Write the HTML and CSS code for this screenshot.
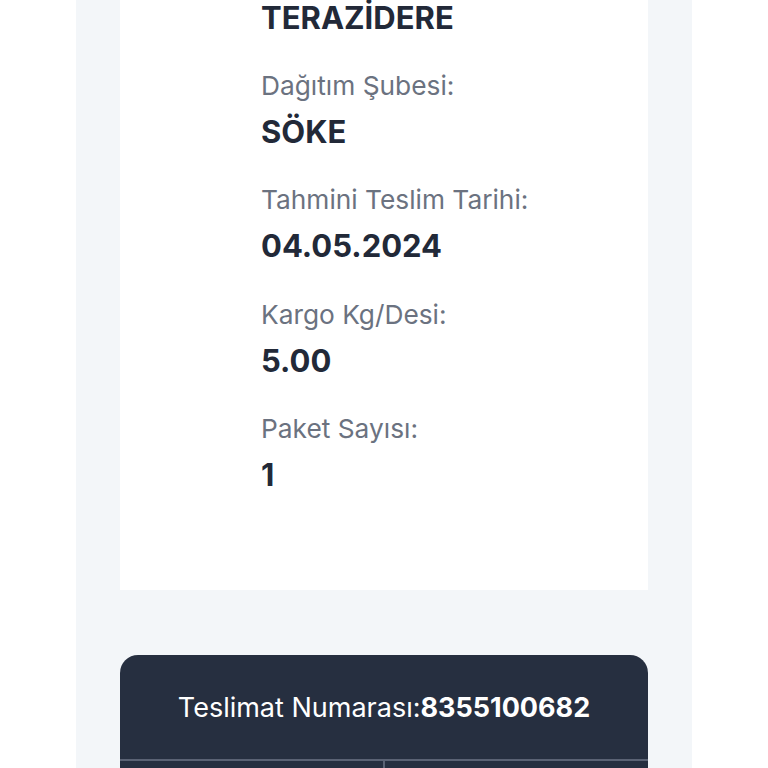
FILE: index.html
```html
<!DOCTYPE html>
<html lang="tr">
<head>
  <meta charset="UTF-8">
  <title>Kargo Takip</title>
  <link rel="stylesheet" href="styles.css">
</head>
<body>
  <div class="page">
    <div class="panel">
      <section class="info-card">
        <div class="info-value first">TERAZİDERE</div>
        <div class="info-item">
          <div class="info-label">Dağıtım Şubesi:</div>
          <div class="info-value">SÖKE</div>
        </div>
        <div class="info-item">
          <div class="info-label">Tahmini Teslim Tarihi:</div>
          <div class="info-value">04.05.2024</div>
        </div>
        <div class="info-item">
          <div class="info-label">Kargo Kg/Desi:</div>
          <div class="info-value">5.00</div>
        </div>
        <div class="info-item">
          <div class="info-label">Paket Sayısı:</div>
          <div class="info-value">1</div>
        </div>
      </section>
      <section class="delivery-card">
        <div class="delivery-head">Teslimat Numarası:<strong>8355100682</strong></div>
        <div class="delivery-tabs">
          <div class="tab"></div>
          <div class="tab"></div>
        </div>
      </section>
    </div>
  </div>
</body>
</html>
```

FILE: styles.css
```css
body {
  margin: 0;
  background: #fff;
  font-family: Inter, 'Noto Sans', Arial, sans-serif;
  overflow: hidden;
}
.page {
  padding: 0 76px;
}
.panel {
  background: #f3f6f9;
  padding: 0 44px;
  min-height: 768px;
}
.info-card {
  background: #fff;
  padding: 2px 20px 95px 141px;
}
.info-value {
  font-size: 31px;
  font-weight: 700;
  line-height: 40px;
  color: #222938;
  margin-top: 8px;
}
.info-value.first {
  margin-top: 0;
  line-height: 32px;
  padding-bottom: 3px;
}
.info-item {
  margin-top: 30.5px;
}
.info-label {
  font-size: 26.3px;
  line-height: 36px;
  color: #6b7280;
}
.delivery-card {
  margin-top: 65px;
  background: #262f40;
  border-radius: 18px 18px 0 0;
  color: #fff;
}
.delivery-head {
  height: 104px;
  display: flex;
  align-items: center;
  justify-content: center;
  font-size: 27px;
}
.delivery-head strong {
  font-weight: 700;
}
.delivery-tabs {
  display: flex;
  border-top: 2px solid #5a6274;
  height: 40px;
}
.tab {
  flex: 1;
}
.tab + .tab {
  border-left: 2px solid #5a6274;
}
```
